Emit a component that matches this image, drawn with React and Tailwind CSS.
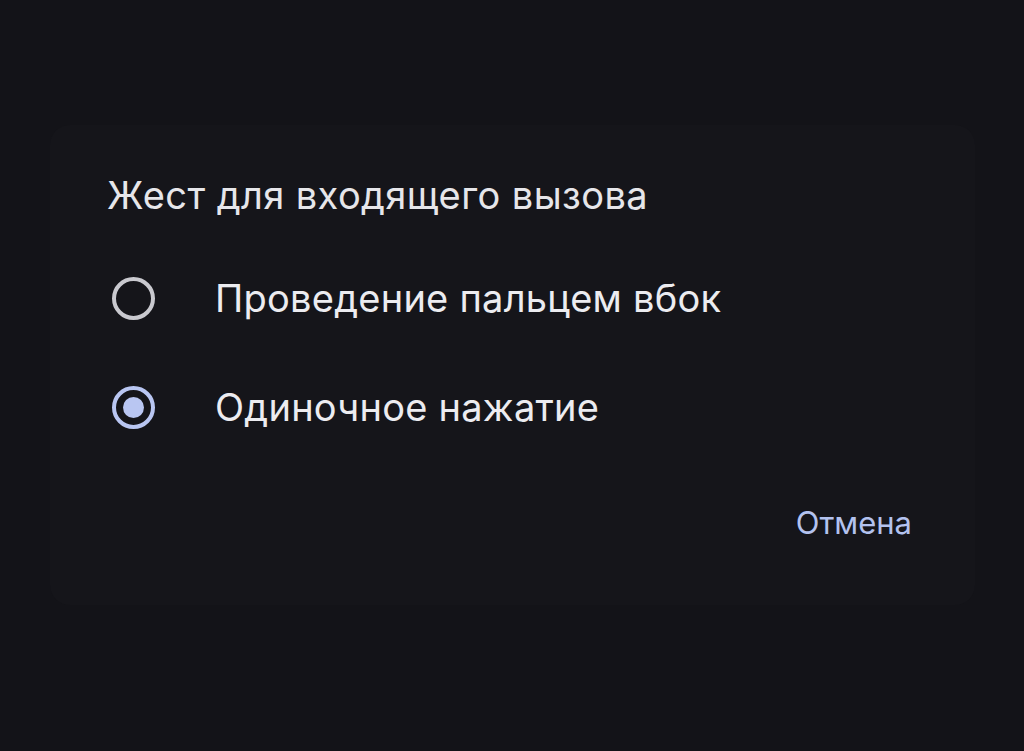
import React from "react";

function Radio({ checked }) {
  return (
    <span
      className={
        "flex h-[43px] w-[43px] shrink-0 items-center justify-center rounded-full border-[4px] " +
        (checked ? "border-[#b9c6f2]" : "border-[#c9c9cf]")
      }
    >
      {checked && <span className="h-[21px] w-[21px] rounded-full bg-[#b9c6f2]" />}
    </span>
  );
}

export default function App() {
  const options = [
    { label: "Проведение пальцем вбок", checked: false },
    { label: "Одиночное нажатие", checked: true },
  ];
  return (
    <div
      className="h-[751px] w-[1024px] overflow-hidden bg-[#131318] pt-[125px] pl-[50px]"
      style={{ fontFamily: "Inter, 'Noto Sans', sans-serif" }}
    >
      <div className="flex h-[480px] w-[925px] flex-col rounded-[20px] bg-[#15151a] pl-[57px] pr-[63px] pt-[44px]">
        <h2 className="text-[38px] leading-[52px] tracking-[0.4px] text-[#e6e6ea]">Жест для входящего вызова</h2>
        <div className="mt-[50px] flex flex-col gap-[55px]">
          {options.map((o) => (
            <div key={o.label} className="flex items-center gap-[60px] pl-[5px]">
              <Radio checked={o.checked} />
              <span className="text-[38px] leading-[54px] tracking-[0.25px] text-[#ececf0]">{o.label}</span>
            </div>
          ))}
        </div>
        <div className="mt-[69px] flex justify-end">
          <span className="text-[31px] leading-[40px] text-[#b3c2ef]">Отмена</span>
        </div>
      </div>
    </div>
  );
}
